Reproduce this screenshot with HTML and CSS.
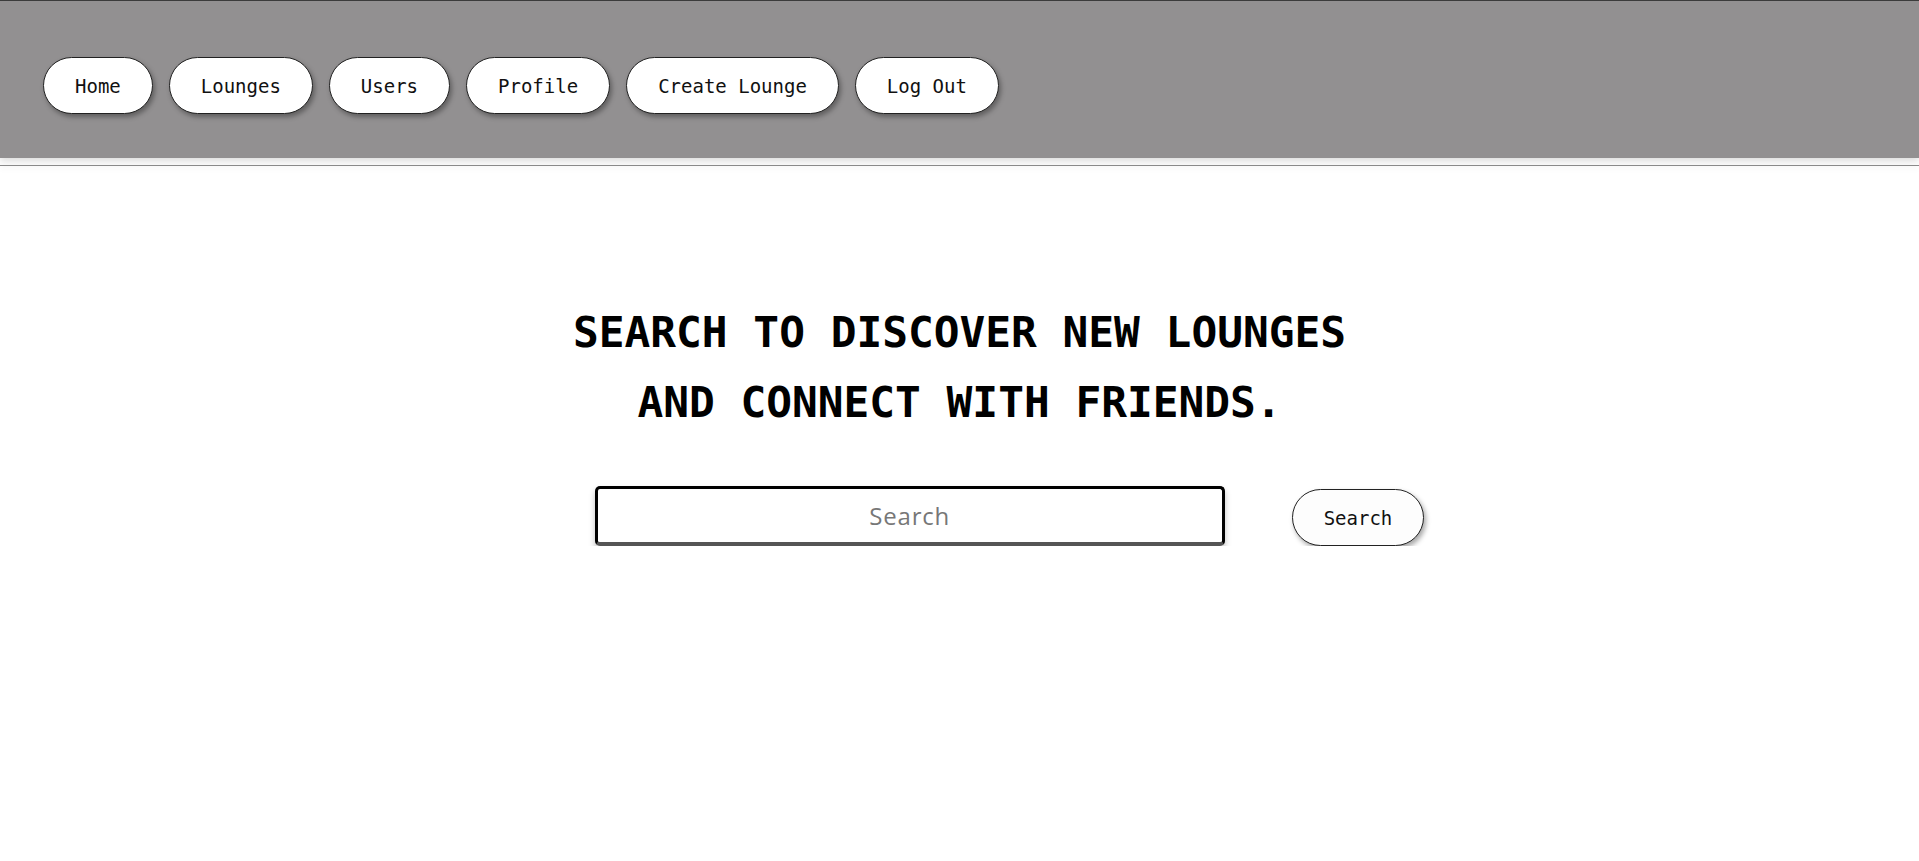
FILE: index.html
```html
<!DOCTYPE html>
<html lang="en">
<head>
<meta charset="utf-8">
<title>Lounges</title>
<link rel="stylesheet" href="styles.css">
</head>
<body>
<header class="topbar">
  <nav class="nav">
    <a class="pill" href="#">Home</a>
    <a class="pill" href="#">Lounges</a>
    <a class="pill" href="#">Users</a>
    <a class="pill" href="#">Profile</a>
    <a class="pill" href="#">Create Lounge</a>
    <a class="pill" href="#">Log Out</a>
  </nav>
</header>
<div class="divider"></div>
<main class="hero">
  <h1 class="title">SEARCH TO DISCOVER NEW LOUNGES<br>AND CONNECT WITH FRIENDS.</h1>
  <form class="search">
    <input class="search-input" type="text" placeholder="Search">
    <button class="pill search-btn" type="button">Search</button>
  </form>
</main>
</body>
</html>
```
FILE: styles.css
```css
html, body {
  margin: 0;
  padding: 0;
  background: #ffffff;
}
body {
  font-family: "DejaVu Sans Mono", "Liberation Mono", monospace;
  color: #000;
}
.topbar {
  background: #929091;
  border-top: 1px solid #3b3b3b;
  height: 157px;
  box-sizing: content-box;
  box-shadow: 0 3px 7px rgba(0, 0, 0, 0.14);
  position: relative;
  z-index: 1;
}
.nav {
  display: flex;
  gap: 16px;
  padding: 56px 0 0 43px;
}
.pill {
  display: inline-flex;
  align-items: center;
  justify-content: center;
  box-sizing: border-box;
  height: 57px;
  padding: 0 31px;
  border: 1px solid #222;
  border-radius: 29px;
  background: #ffffff;
  color: #111;
  text-decoration: none;
  font-family: "DejaVu Sans Mono", "Liberation Mono", monospace;
  font-size: 19px;
  box-shadow: 2px 3px 5px rgba(0, 0, 0, 0.35);
}
.divider {
  margin-top: 7px;
  height: 1px;
  background: #8c8c8c;
  box-shadow: 0 2px 6px rgba(0, 0, 0, 0.12);
}
.hero {
  display: flex;
  flex-direction: column;
  align-items: center;
  padding-top: 131px;
}
.title {
  margin: 0;
  font-family: "DejaVu Sans Mono", "Liberation Mono", monospace;
  font-weight: bold;
  font-size: 42.8px;
  line-height: 70px;
  text-align: center;
  color: #000;
}
.search {
  display: flex;
  align-items: flex-end;
  gap: 67px;
  margin: 49px 0 0 100px;
}
.search-input {
  box-sizing: border-box;
  width: 630px;
  height: 60px;
  border: 3px solid #000;
  border-bottom: 4px solid #555;
  border-radius: 5px;
  background: #fff;
  box-shadow: 0 4px 6px rgba(0, 0, 0, 0.25);
  text-align: center;
  font-family: "Open Sans", "Noto Sans", sans-serif;
  font-size: 24px;
  letter-spacing: 0.8px;
  outline: none;
  padding: 0 10px;
}
.search-input::placeholder {
  color: #777;
}
.search-btn {
  height: 57px;
  background: #fdfdfd;
  cursor: pointer;
}
```
